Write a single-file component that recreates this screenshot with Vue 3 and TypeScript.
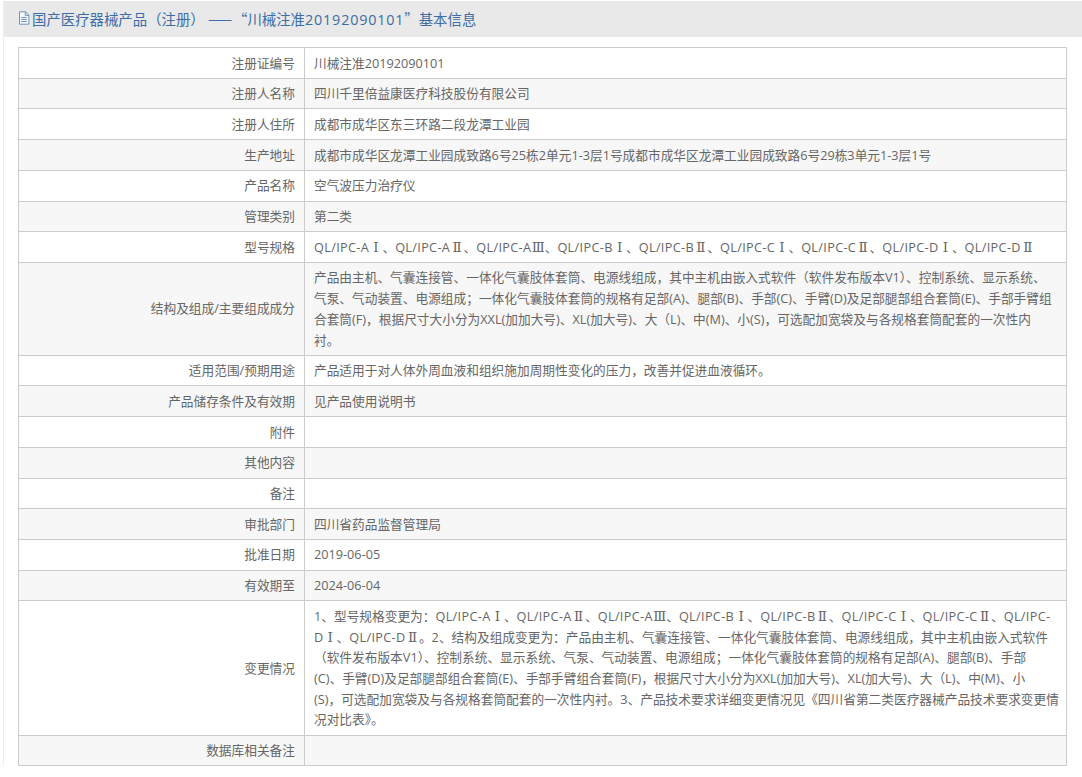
<script setup lang="ts">
interface Row { label: string; lines: string[] }
const rows: Row[] = [
  { label: '注册证编号', lines: ['川械注准20192090101'] },
  { label: '注册人名称', lines: ['四川千里倍益康医疗科技股份有限公司'] },
  { label: '注册人住所', lines: ['成都市成华区东三环路二段龙潭工业园'] },
  { label: '生产地址', lines: ['成都市成华区龙潭工业园成致路6号25栋2单元1-3层1号成都市成华区龙潭工业园成致路6号29栋3单元1-3层1号'] },
  { label: '产品名称', lines: ['空气波压力治疗仪'] },
  { label: '管理类别', lines: ['第二类'] },
  { label: '型号规格', lines: ['QL/IPC-AⅠ、QL/IPC-AⅡ、QL/IPC-AⅢ、QL/IPC-BⅠ、QL/IPC-BⅡ、QL/IPC-CⅠ、QL/IPC-CⅡ、QL/IPC-DⅠ、QL/IPC-DⅡ'] },
  { label: '结构及组成/主要组成成分', lines: [
    '产品由主机、气囊连接管、一体化气囊肢体套筒、电源线组成，其中主机由嵌入式软件（软件发布版本V1）、控制系统、显示系统、',
    '气泵、气动装置、电源组成；一体化气囊肢体套筒的规格有足部(A)、腿部(B)、手部(C)、手臂(D)及足部腿部组合套筒(E)、手部手臂组',
    '合套筒(F)，根据尺寸大小分为XXL(加加大号)、XL(加大号)、大（L)、中(M)、小(S)，可选配加宽袋及与各规格套筒配套的一次性内',
    '衬。',
  ] },
  { label: '适用范围/预期用途', lines: ['产品适用于对人体外周血液和组织施加周期性变化的压力，改善并促进血液循环。'] },
  { label: '产品储存条件及有效期', lines: ['见产品使用说明书'] },
  { label: '附件', lines: [] },
  { label: '其他内容', lines: [] },
  { label: '备注', lines: [] },
  { label: '审批部门', lines: ['四川省药品监督管理局'] },
  { label: '批准日期', lines: ['2019-06-05'] },
  { label: '有效期至', lines: ['2024-06-04'] },
  { label: '变更情况', lines: [
    '1、型号规格变更为：QL/IPC-AⅠ、QL/IPC-AⅡ、QL/IPC-AⅢ、QL/IPC-BⅠ、QL/IPC-BⅡ、QL/IPC-CⅠ、QL/IPC-CⅡ、QL/IPC-',
    'DⅠ、QL/IPC-DⅡ。2、结构及组成变更为：产品由主机、气囊连接管、一体化气囊肢体套筒、电源线组成，其中主机由嵌入式软件',
    '（软件发布版本V1）、控制系统、显示系统、气泵、气动装置、电源组成；一体化气囊肢体套筒的规格有足部(A)、腿部(B)、手部',
    '(C)、手臂(D)及足部腿部组合套筒(E)、手部手臂组合套筒(F)，根据尺寸大小分为XXL(加加大号)、XL(加大号)、大（L)、中(M)、小',
    '(S)，可选配加宽袋及与各规格套筒配套的一次性内衬。3、产品技术要求详细变更情况见《四川省第二类医疗器械产品技术要求变更情',
    '况对比表》。',
  ] },
  { label: '数据库相关备注', lines: [] },
]
const splitLine = (line: string): string[] => line.split(/(QL\/IPC-[A-D]?|[ⅠⅡⅢ])/).filter(Boolean)
const partClass = (part: string): string => (/^[ⅠⅡⅢ]$/.test(part) ? 'rn' : part.startsWith('QL/IPC') ? 'model' : '')
</script>

<template>
  <div class="page">
    <div class="panel">
      <div class="head">
        <svg class="doc" viewBox="0 0 12 14" width="12" height="14" aria-hidden="true">
          <path d="M1.5 .8h6l3.4 3.4v9H1.5z" fill="#f4f6f9" stroke="#6f94bd" />
          <path d="M7.3 .8v3.6h3.6M3.3 6.5h5.4M3.3 8.5h5.4M3.3 10.5h5.4" fill="none" stroke="#6f94bd" />
        </svg>
        <span class="title">国产医疗器械产品（注册） <span class="dash">——</span>“川械注准<span class="code">20192090101</span>”基本信息</span>
      </div>
      <table class="info">
        <tbody>
          <tr v-for="row in rows" :key="row.label">
            <td class="key">{{ row.label }}</td>
            <td class="val">
              <div v-for="line in row.lines" :key="line" class="line"><span v-for="(part, i) in splitLine(line)" :key="i" :class="partClass(part)">{{ part }}</span></div>
              <div v-if="!row.lines.length" class="line">&nbsp;</div>
            </td>
          </tr>
        </tbody>
      </table>
    </div>
  </div>
</template>

<style>
html, body { background: #fff; }
</style>

<style scoped>
.page {
  width: 1082px;
  height: 777px;
  overflow: hidden;
  box-sizing: border-box;
  padding: 1px 0 0 3px;
  font-family: "Open Sans", "Noto Sans CJK SC", sans-serif;
  font-size: 12.7px;
  color: #666;
}
.panel {
  border-left: 1px solid #eee;
}
.head {
  height: 36px;
  box-sizing: border-box;
  padding: 0 0 2px 14px;
  display: flex;
  align-items: center;
  gap: 2px;
  background: #e9e9e9;
  color: #3c6ea5;
  white-space: nowrap;
}
.title {
  font-family: "Noto Sans CJK SC", sans-serif;
  font-size: 14.4px;
}
.dash { letter-spacing: 1px; }
.code {
  font-family: "Open Sans", sans-serif;
  letter-spacing: .8px;
}
.doc { flex: none; }
.info {
  margin: 10px 0 0 14px;
  width: 1049px;
  border-collapse: collapse;
  table-layout: fixed;
}
.info tr:nth-child(even) td { background: #f7f7f7; }
.info td {
  border: 1px solid #ccc;
  padding: 4.5px 9px;
  line-height: 20.7px;
}
.info td.key {
  width: 267px;
  padding-right: 9px;
  text-align: right;
}
.line { white-space: nowrap; }
.model { letter-spacing: .33px; }
.rn {
  display: inline-block;
  width: 13.4px;
  text-align: center;
  font-family: "DejaVu Serif", serif;
  font-size: 13.5px;
  line-height: 1;
  letter-spacing: -.5px;
}
</style>
